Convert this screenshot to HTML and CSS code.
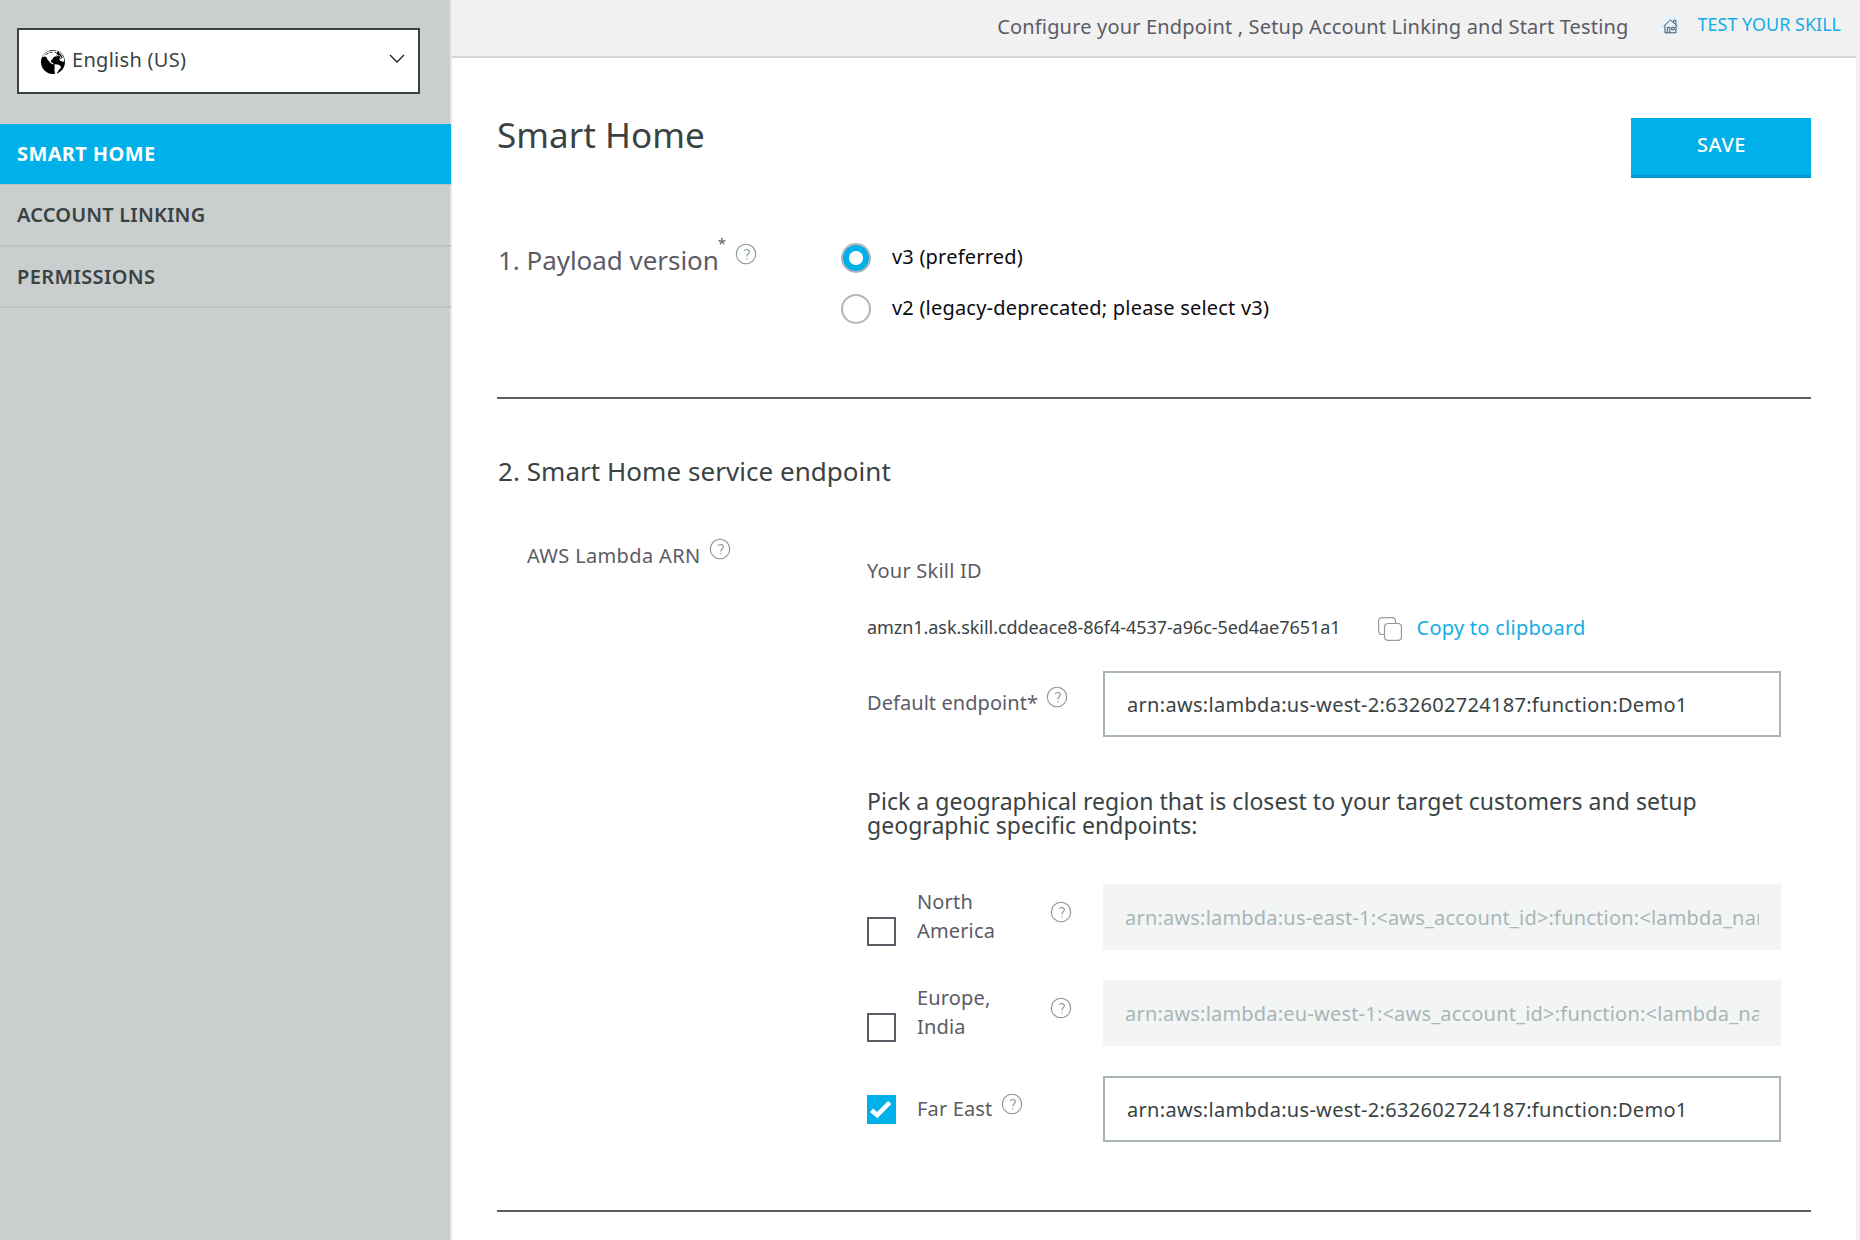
FILE: index.html
```html
<!DOCTYPE html>
<html lang="en">
<head>
<meta charset="utf-8">
<title>Smart Home</title>
<link rel="stylesheet" href="styles.css">
</head>
<body>
<svg class="defs" width="0" height="0" aria-hidden="true">
  <symbol id="help" viewBox="0 0 22 22">
    <circle cx="11" cy="11" r="9.7" fill="none" stroke="#869394" stroke-width="1.100"/>
    <path d="M9.2 7.9C9.7 6.9 10.7 6.5 11.7 6.5c1.5 0 2.6.9 2.6 2.2 0 1.9-2.4 2.2-2.4 4.7M11.9 15.2v1.400" fill="none" stroke="#869394" stroke-width="1.100"/>
  </symbol>
</svg>
<div class="app">
  <aside class="sidebar">
    <button class="locale" type="button">
      <svg class="globe" viewBox="0 0 24 24">
        <circle cx="12" cy="12" r="12" fill="#000"/>
        <path d="M1.2 7.2C3 3.200 6.800 .9 11 .7l4.500.1 1.500 1.200-1.800 1.200 1.600 1.600-2.500 1.800-1.500.3-1.300 2-1.800 2.200.6 1.300 2.300.5-1.300 1.600-2.400-1.900-2.400-3.200-1.200-2.300-1.500-.6z" fill="#fff"/>
        <path d="M13.200 14.200l3.800.2 2.600 1.700.2 1.700-2.300 2.700-1.600 3.200-1.900.3-.6-3.900.3-3.200z" fill="#fff"/>
        <path d="M15 7.200l2.300-1.900 2.200 2-1.200 1.800.7 1.600 2.200.8 2.200.2-.6-4-1.600-2.600-2.800-2.900z" fill="#fff"/>
        <path d="M4.500 4.600l3-1.500M8.500 2.200l3 .3M13.500 1.800l2 1.200M19 9l1.800-1.200M16.500 23l3.500-4" stroke="#000" stroke-width=".8"/>
        <path d="M16.300 2l3.200 2.200 2.500 3.600-1.700-.4-1.500-1.900-2.200-.7z" fill="#000"/>
      </svg>
      <span class="locale-name">English (US)</span>
      <svg class="chevron" viewBox="0 0 16 10"><path d="M1 1l7 7 7-7" fill="none" stroke="#222" stroke-width="1.300"/></svg>
    </button>
    <nav class="nav">
      <a class="nav-item active">SMART HOME</a>
      <a class="nav-item linking">ACCOUNT LINKING</a>
      <a class="nav-item last">PERMISSIONS</a>
    </nav>
  </aside>
  <div class="page">
    <header class="topbar">
      <span class="hint">Configure your Endpoint , Setup Account Linking and Start Testing</span>
      <span class="house-wrap">
        <svg class="house" viewBox="0 0 15 15" fill="none" stroke="#46535c" stroke-width="1">
          <path d="M.6 7.200L7.500 1l6.900 6.200M2 6.800v7h11v-7M10.600 3.500V1.300h2.300v4.400M4.300 13.700V8.300h2.500v5.400M8.700 8.300h2.600v2.500H8.700z"/>
        </svg>
      </span>
      <a class="test-link">TEST YOUR SKILL</a>
    </header>
    <main class="content">
      <div class="title-row">
        <h1 class="title">Smart Home</h1>
        <button class="save" type="button">SAVE</button>
      </div>
      <section class="payload">
        <div class="payload-label">
          <h2 class="heading muted">1. Payload version</h2><sup class="star">*</sup>
          <svg class="help"><use href="#help"/></svg>
        </div>
        <div class="radios">
          <label class="radio"><span class="dot on"></span><span>v3 (preferred)</span></label>
          <label class="radio"><span class="dot"></span><span>v2 (legacy-deprecated; please select v3)</span></label>
        </div>
      </section>
      <section class="endpoint">
        <h2 class="heading">2. Smart Home service endpoint</h2>
        <div class="endpoint-body">
          <div class="arn-label">
            <span class="arn-text">AWS Lambda ARN</span>
            <svg class="help"><use href="#help"/></svg>
          </div>
          <div class="fields">
            <div class="skill-label">Your Skill ID</div>
            <div class="skill-row">
              <span class="skill-id">amzn1.ask.skill.cddeace8-86f4-4537-a96c-5ed4ae7651a1</span>
              <svg class="copy" viewBox="0 0 24 24" fill="none" stroke="#999" stroke-width="1.200">
                <path d="M6.500 17.500H4A3.400 3.400 0 0 1 .6 14.100V4A3.400 3.400 0 0 1 4 .6h10.100A3.400 3.400 0 0 1 17.500 4v2.500"/>
                <rect x="6.500" y="6.500" width="16.900" height="16.900" rx="3.400"/>
              </svg>
              <a class="copy-link">Copy to clipboard</a>
            </div>
            <div class="row default-row">
              <div class="row-label">
                <span class="default-text">Default endpoint*</span>
                <svg class="help"><use href="#help"/></svg>
              </div>
              <input class="arn" type="text" value="arn:aws:lambda:us-west-2:632602724187:function:Demo1">
            </div>
            <div class="pick">
              <p>Pick a geographical region that is closest to your target customers and setup geographic specific endpoints:</p>
            </div>
            <div class="row">
              <div class="row-label">
                <span class="box"></span>
                <span class="region two-line">North<br>America</span>
                <svg class="help"><use href="#help"/></svg>
              </div>
              <input class="arn" type="text" disabled placeholder="arn:aws:lambda:us-east-1:&lt;aws_account_id&gt;:function:&lt;lambda_name&gt;">
            </div>
            <div class="row">
              <div class="row-label">
                <span class="box"></span>
                <span class="region two-line">Europe,<br>India</span>
                <svg class="help"><use href="#help"/></svg>
              </div>
              <input class="arn" type="text" disabled placeholder="arn:aws:lambda:eu-west-1:&lt;aws_account_id&gt;:function:&lt;lambda_name&gt;">
            </div>
            <div class="row far-east">
              <div class="row-label">
                <span class="box checked">
                  <svg viewBox="0 0 29 29"><path d="M4.500 15.200l5.700 5L22.700 7.500" fill="none" stroke="#fff" stroke-width="4.600"/></svg>
                </span>
                <span class="region">Far East</span>
                <svg class="help"><use href="#help"/></svg>
              </div>
              <input class="arn" type="text" value="arn:aws:lambda:us-west-2:632602724187:function:Demo1">
            </div>
          </div>
        </div>
      </section>
    </main>
  </div>
</div>
</body>
</html>
```
FILE: styles.css
```css
* { box-sizing: border-box; }

body {
  margin: 0;
  background: #fff;
  color: #5c5b66;
  font: 20px/28px "Noto Sans", sans-serif;
}

button, input { font: inherit; }
h1, h2, p { margin: 0; font-weight: 400; }
svg { display: block; flex: none; }
.defs { position: absolute; }

.app {
  display: flex;
  height: 1240px;
  overflow: hidden;
}

/* Sidebar */
.sidebar {
  width: 452px;
  flex: none;
  padding-top: 28px;
  background: #cacece;
  border-right: 2px solid #e6e6e6;
}

.locale {
  display: flex;
  align-items: flex-start;
  width: 403px;
  height: 66px;
  margin-left: 17px;
  padding: 15px 13px 0 22px;
  background: #fff;
  border: 2px solid #3a4344;
  color: #3a4344;
}
.globe { width: 24px; height: 24px; margin-top: 5px; }
.locale-name { margin: 1px 0 0 7px; letter-spacing: .29px; }
.chevron { width: 16px; height: 10px; margin: 9px 0 0 auto; }

.nav { margin: 30px -1px 0 0; }
.nav-item {
  display: block;
  height: 62px;
  padding: 16px 17px 0;
  border-bottom: 2px solid #c1c1c4;
  color: #3a4344;
  font-weight: 600;
  letter-spacing: .38px;
}
.nav-item.active {
  height: 61px;
  border-bottom-width: 1px;
  background: #00b0e8;
  background-clip: padding-box;
  color: #fff;
  font-weight: 700;
}
.nav-item.linking { letter-spacing: .17px; }
.nav-item.last { height: 61px; }

/* Page frame */
.page {
  flex: 1;
  border-right: 4px solid #f1f1f1;
}
.topbar {
  display: flex;
  align-items: flex-start;
  justify-content: flex-end;
  height: 58px;
  padding: 12px 15px 0 0;
  background: #f1f1f1;
  border-bottom: 2px solid #d5d5d5;
}
.hint { margin-top: 1px; letter-spacing: .175px; }
.house-wrap {
  display: flex;
  align-items: center;
  justify-content: center;
  width: 22px;
  height: 22px;
  margin: 3px 16px 0 31px;
  border-radius: 50%;
  background: #e6f3fc;
}
.house { width: 15px; height: 15px; }
.test-link {
  margin-top: -2px;
  color: #14ace6;
  font-size: 18px;
}

.content { padding: 60px 45px 0 45px; }

.title-row {
  display: flex;
  justify-content: space-between;
  height: 60px;
}
.title {
  color: #3a4344;
  font-size: 35px;
  line-height: 34px;
  letter-spacing: .05px;
}
.save {
  width: 180px;
  height: 60px;
  padding: 0 0 3px 1px;
  background: #00b0e8;
  border: 0;
  border-bottom: 3px solid #0099c9;
  color: #fff;
  font-weight: 500;
  letter-spacing: .6px;
}

/* Payload version */
.payload {
  display: flex;
  height: 221px;
  padding-top: 65px;
  border-bottom: 2px solid #5c5b66;
}
.payload-label {
  display: flex;
  align-items: flex-start;
  width: 344px;
}
.heading {
  padding-left: 1px;
  color: #3a4344;
  font-size: 26px;
  line-height: 34px;
  letter-spacing: .04px;
}
.heading.muted { color: #5c5b66; letter-spacing: -.04px; }
.star {
  margin: -9px 0 0 -1px;
  font-size: 15px;
  line-height: 18px;
}
.help { width: 22px; height: 22px; }
.payload-label .help { margin-left: 9px; }
.radio {
  display: flex;
  align-items: flex-start;
  height: 51px;
  color: #0b0b12;
  letter-spacing: .2px;
}
.dot {
  width: 30px;
  height: 30px;
  margin-right: 21px;
  border: 2px solid #b5b3bc;
  border-radius: 50%;
}
.dot.on { background: radial-gradient(circle, #fff 6.500px, #00b0e8 7.500px); }

/* Service endpoint */
.endpoint {
  height: 813px;
  padding-top: 55px;
  border-bottom: 2px solid #5c5b66;
}
.endpoint-body { display: flex; padding-left: 30px; }
.arn-label { display: flex; width: 340px; padding-top: 50px; }
.arn-text { margin-top: 4px; letter-spacing: .35px; }
.arn-label .help { margin: 0 0 0 8px; }
.fields { width: 914px; padding-top: 69px; }
.skill-label { letter-spacing: .22px; }
.skill-row { display: flex; height: 86px; padding-top: 28px; }
.skill-id {
  color: #3a4344;
  font-size: 18px;
  letter-spacing: -.055px;
  white-space: nowrap;
}
.copy { width: 24px; height: 24px; margin: 4px 14px 0 38px; }
.copy-link { color: #14ace6; letter-spacing: .27px; margin-top: 1px; }

.row {
  display: flex;
  align-items: flex-start;
  height: 66px;
  margin-bottom: 30px;
}
.row-label {
  display: flex;
  align-items: flex-start;
  width: 236px;
  height: 66px;
}
.default-text { margin-top: 18px; letter-spacing: .06px; }
.default-row .help { margin: 15px 0 0 8px; }
.arn {
  width: 678px;
  height: 66px;
  padding: 0 19px 0 22px;
  background: #fff;
  border: 2px solid #a8b6b8;
  border-radius: 0;
  color: #3a4344;
  letter-spacing: .3px;
}
.arn:disabled {
  padding: 0 22px;
  border: 0;
  background: #f3f5f4;
  letter-spacing: .2px;
}
.arn::placeholder { color: #a8b6b8; opacity: 1; }

.pick {
  width: 860px;
  margin: 52px 0 47px;
  color: #3a4344;
  font-size: 23px;
  line-height: 24px;
  letter-spacing: .035px;
}
.box {
  width: 29px;
  height: 29px;
  margin: 33px 21px 0 0;
  border: 2px solid #5c5b66;
}
.box.checked { margin-top: 19px; border: 0; background: #00b0e8; }
.region { letter-spacing: .15px; margin-top: 19px; }
.two-line { width: 133px; margin-top: 3px; line-height: 29px; }
.row .two-line + .help { margin-top: 17px; }
.far-east .help { margin: 17px 0 0 9px; }
```
